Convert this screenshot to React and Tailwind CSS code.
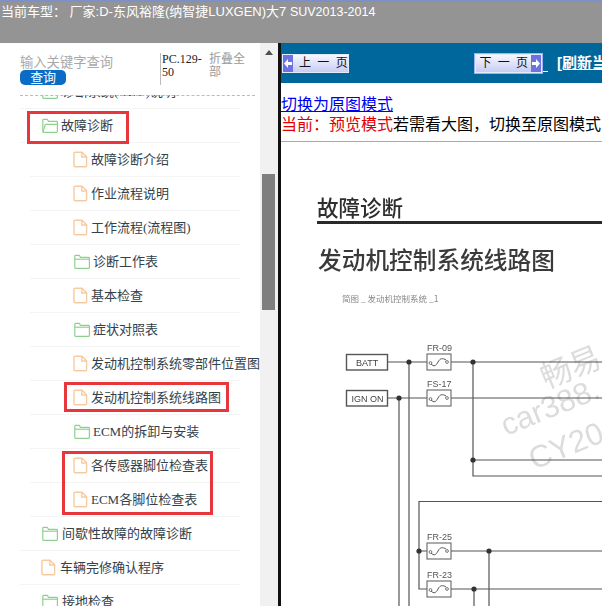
const treeFont = '[font-family:"Liberation_Serif","Noto_Sans_CJK_SC",serif]';

const rows = [
  { label: '诊断系统(OBD)说明', type: 'folder', box: 'ml-[20px] w-[220px] pl-[22px]', gap: 'gap-[4px]' },
  { label: '故障诊断', type: 'open', box: 'ml-[20px] w-[220px] pl-[22px]', gap: 'gap-[3px]' },
  { label: '故障诊断介绍', type: 'file', box: 'ml-[30px] w-[210px] pl-[43px]', gap: 'gap-[3px]' },
  { label: '作业流程说明', type: 'file', box: 'ml-[30px] w-[210px] pl-[43px]', gap: 'gap-[3px]' },
  { label: '工作流程(流程图)', type: 'file', box: 'ml-[30px] w-[210px] pl-[43px]', gap: 'gap-[3px]' },
  { label: '诊断工作表', type: 'folder', box: 'ml-[30px] w-[210px] pl-[44px]', gap: 'gap-[3px]' },
  { label: '基本检查', type: 'file', box: 'ml-[30px] w-[210px] pl-[43px]', gap: 'gap-[3px]' },
  { label: '症状对照表', type: 'folder', box: 'ml-[30px] w-[210px] pl-[44px]', gap: 'gap-[3px]' },
  { label: '发动机控制系统零部件位置图', type: 'file', box: 'ml-[30px] w-[210px] pl-[43px]', gap: 'gap-[3px]' },
  { label: '发动机控制系统线路图', type: 'file', box: 'ml-[30px] w-[210px] pl-[43px]', gap: 'gap-[3px]' },
  { label: 'ECM的拆卸与安装', type: 'folder', box: 'ml-[30px] w-[210px] pl-[44px]', gap: 'gap-[3px]' },
  { label: '各传感器脚位检查表', type: 'file', box: 'ml-[30px] w-[210px] pl-[43px]', gap: 'gap-[3px]' },
  { label: 'ECM各脚位检查表', type: 'file', box: 'ml-[30px] w-[210px] pl-[43px]', gap: 'gap-[3px]' },
  { label: '间歇性故障的故障诊断', type: 'folder', box: 'ml-[20px] w-[220px] pl-[22px]', gap: 'gap-[4px]' },
  { label: '车辆完修确认程序', type: 'file', box: 'ml-[20px] w-[220px] pl-[21px]', gap: 'gap-[4px]' },
  { label: '接地检查', type: 'folder', box: 'ml-[20px] w-[220px] pl-[22px]', gap: 'gap-[4px]' },
];

function FolderIcon({ open }) {
  return (
    <svg width="16" height="15" viewBox="0 0 16 15" fill="none" stroke="#8ed18e" strokeWidth="1.2" className="shrink-0">
      <path d="M.8 13.6V2.2q0-.8.8-.8h3.6l1.4 2h8q.8 0 .8.8v9.4q0 .8-.8.8H1.6q-.8 0-.8-.8z" />
      {open ? <path d="M1 13.8 3.4 6.4h12" /> : <path d="M.8 5.2h14.4" />}
    </svg>
  );
}

function FileIcon() {
  return (
    <svg width="15" height="17" viewBox="0 0 15 17" fill="none" stroke="#f6cba0" strokeWidth="1.4" className="shrink-0">
      <path d="M1 2.2q0-1 1-1h7l4.6 4.6v9q0 1-1 1H2q-1 0-1-1z" />
      <path d="M8.800 1.200v4.800h4.800" />
    </svg>
  );
}

function TreeRow({ row }) {
  return (
    <div className={`h-[34px] flex items-center border-b border-[#f4f4f4] text-[13px] text-[#33414a] whitespace-nowrap ${row.box} ${row.gap}`}>
      {row.type === 'file' ? <FileIcon /> : <FolderIcon open={row.type === 'open'} />}
      <span>{row.label}</span>
    </div>
  );
}

function PageButton({ label, next }) {
  return (
    <div className={`w-[67px] h-[19px] shrink-0 flex items-center border border-[#e4eafa] bg-gradient-to-b from-[#f6f7fe] to-[#c8cdf2] text-[12px] text-[#111] ${next ? 'flex-row-reverse' : ''}`}>
      <span className="w-[10px] h-full shrink-0 bg-[#6c72e0] flex items-center justify-center">
        <svg width="8" height="9" viewBox="0 0 8 9" fill="white">
          {next ? <path d="M0 3h4V0l4 4.500L4 9V6H0z" /> : <path d="M8 3H4V0L0 4.500 4 9V6h4z" />}
        </svg>
      </span>
      <span className={`flex-1 text-center tracking-[1.5px] whitespace-nowrap ${next ? 'pl-[2px]' : 'pl-[6px]'}`}>{label}</span>
    </div>
  );
}

function Fuse({ x, y, name }) {
  return (
    <g transform={`translate(${x} ${y})`}>
      <text x="0" y="-11" fontSize="9" fill="#555" stroke="none" fontFamily="Liberation Sans">{name}</text>
      <rect x="0" y="-8" width="24" height="16" fill="white" stroke="#666" strokeWidth="1.1" />
      <path d="M4 2c3 3 5 2 7-2s5-4 8-2" fill="none" stroke="#555" strokeWidth="1" />
      <circle cx="3.500" cy="1" r="1.400" fill="white" stroke="#555" strokeWidth=".8" />
      <circle cx="20" cy="0" r="1.400" fill="white" stroke="#555" strokeWidth=".8" />
    </g>
  );
}

function Diagram() {
  const dots = [[399, 398], [409, 362], [473, 362], [473, 460], [419, 551], [489, 551], [474, 589]];
  return (
    <svg width="321" height="464" viewBox="281 142 321 464" className="block blur-[0.35px]">
      <text x="317" y="216" fontSize="21.500" fill="#2e2e2e" fontWeight="500" fontFamily="Noto Sans CJK SC">故障诊断</text>
      <rect x="317" y="221" width="285" height="3" fill="#2a2a2a" />
      <text x="318" y="269" fontSize="23.700" fill="#3a3a3a" fontWeight="500" fontFamily="Noto Sans CJK SC">发动机控制系统线路图</text>
      <text x="342" y="302" fontSize="8.500" fill="#888" fontFamily="Noto Sans CJK SC">简图 _ 发动机控制系统 _1</text>

      <g fill="#dcdcdc" fontFamily="Liberation Sans, Noto Sans CJK SC" fontSize="31">
        <text transform="translate(546 389) rotate(-22)">畅易</text>
        <text transform="translate(506 436) rotate(-22)">car388.</text>
        <text transform="translate(534 470) rotate(-22)">CY20</text>
      </g>

      <g stroke="#555" fill="none" strokeWidth="1.200">
        <path d="M388 362H602M388 398H602M473 362V476H602M473 460H602" />
        <path d="M409 362V606M399 398V606" />
        <path d="M602 501.500H419V589H427M419 551H427M450 551H602M450 589H602M489 551V606M474 589V606" />
      </g>

      <g fill="white" stroke="#555" strokeWidth="1.400">
        <rect x="346.500" y="354.500" width="41" height="15.500" />
        <rect x="346.500" y="390.500" width="41" height="15.500" />
      </g>
      <text x="356" y="366" fontSize="9" fill="#444" fontFamily="Liberation Sans">BATT</text>
      <text x="351.500" y="402" fontSize="9" fill="#444" fontFamily="Liberation Sans">IGN ON</text>

      <Fuse x={427} y={362} name="FR-09" />
      <Fuse x={427} y={398} name="FS-17" />
      <Fuse x={427} y={551} name="FR-25" />
      <Fuse x={427} y={589} name="FR-23" />

      {dots.map(([cx, cy]) => (
        <circle key={`${cx}-${cy}`} cx={cx} cy={cy} r="2.600" fill="#333" />
      ))}
    </svg>
  );
}

export default function App() {
  return (
    <div className={`w-[602px] h-[606px] overflow-hidden bg-white flex flex-col ${treeFont}`}>
      {/* top bar */}
      <div className="h-[43px] shrink-0 bg-[#949494] border-t-2 border-[#7e90c8] text-white text-[13px] leading-[19px] pl-[1px] whitespace-nowrap font-['Liberation_Sans','Noto_Sans_CJK_SC',sans-serif]">
        当前车型： 厂家:D-东风裕隆(纳智捷LUXGEN)大7 <span className="text-[12.500px]">SUV2013-2014</span>
      </div>

      <div className="flex-1 flex min-h-0">
        {/* left tree */}
        <div className="w-[260px] shrink-0 flex flex-col min-h-0">
          <div className="h-[52px] shrink-0 flex pl-[20px] pt-[10px] font-['Liberation_Sans','Noto_Sans_CJK_SC',sans-serif]">
            <div className="w-[140px] pt-[3px]">
              <div className="text-[13.300px] leading-[14px] text-[#a9a9a9] whitespace-nowrap">输入关键字查询</div>
              <div className="w-[46px] h-[15px] rounded-[5px] bg-[#0a6cc4] text-white text-[13px] leading-[15px] text-center tracking-[-0.3px]">查询</div>
            </div>
            <div className={`w-[49px] h-[32px] border-l border-[#bbb] text-[12px] leading-[13px] text-[#222] pl-[1px] ${treeFont}`}>PC.129-50</div>
            <div className="w-[38px] text-[12px] leading-[13px] text-[#9a9a9a]">折叠全部</div>
          </div>
          <div className="flex-1 min-h-0 overflow-hidden relative">
            <div className="-mt-[20px]">
              {rows.map((row) => (
                <TreeRow key={row.label} row={row} />
              ))}
            </div>
            {/* dashed edge over the clipped first row */}
            <div className="absolute top-0 left-[20px] w-[235px] border-t border-dashed border-[#bbb]" />
            {/* red annotation boxes */}
            <div className="absolute left-[27px] top-[16px] w-[102px] h-[33px] border-[3px] border-[#e8373c]" />
            <div className="absolute left-[64px] top-[287px] w-[165px] h-[30px] border-[3px] border-[#e8373c]" />
            <div className="absolute left-[62px] top-[356px] w-[151px] h-[64px] border-[3px] border-[#e8373c]" />
          </div>
        </div>

        {/* scrollbar */}
        <div className="w-[18px] shrink-0 bg-[#f1f1f1] pl-[2px] pt-[7px]">
          <div className="ml-[3px] w-0 h-0 border-x-[4px] border-x-transparent border-b-[5px] border-b-[#505050]" />
          <div className="mt-[119px] w-[13px] h-[136px] bg-[#7f7f7f]" />
        </div>

        {/* right page */}
        <div className="flex-1 min-w-0 border-l-[3px] border-[#111] overflow-hidden font-['Liberation_Sans','Noto_Sans_CJK_SC',sans-serif]">
          <div className="h-[40px] bg-[#00679c] flex items-center pl-[1px] whitespace-nowrap">
            <PageButton label="上 一 页" />
            <div className="ml-[125px] shrink-0 border border-[#9fb4ee]">
              <PageButton label="下 一 页" next />
            </div>
            <span className="self-end mb-[11px] w-[5px] shrink-0 border-b border-white" />
            <span className="ml-[9px] shrink-0 text-white font-bold text-[15px] underline">[刷新当前页]</span>
          </div>
          <div className="pt-[12px] text-[16px] leading-[20px] whitespace-nowrap">
            <a href="#" className="text-[#0000ee] underline">切换为原图模式</a>
            <div>
              <span className="text-[#e00000]">当前：预览模式</span>
              <span className="text-black">若需看大图，切换至原图模式</span>
            </div>
          </div>
          <div className="mt-[6px] border-t border-[#aaa]" />
          <Diagram />
        </div>
      </div>
    </div>
  );
}
